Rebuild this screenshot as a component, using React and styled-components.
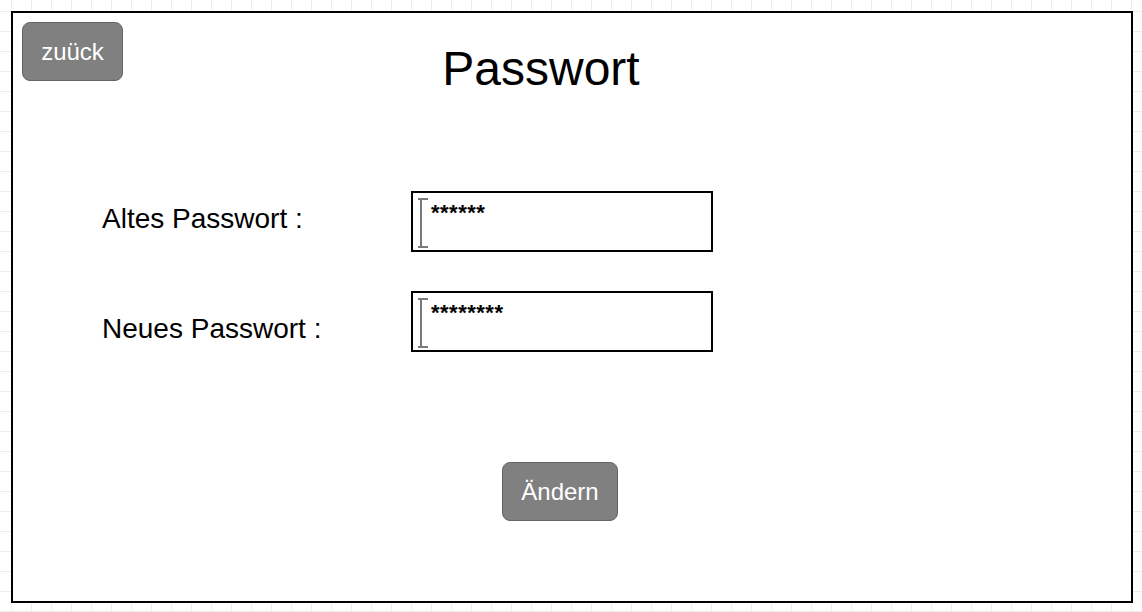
import React from "react";
import styled, { createGlobalStyle } from "styled-components";

const GlobalStyle = createGlobalStyle`
  html, body {
    margin: 0;
    padding: 0;
  }
  body {
    width: 1142px;
    height: 612px;
    overflow: hidden;
    font-family: "Liberation Sans", Arial, Helvetica, sans-serif;
    background-color: #fff;
    background-image:
      linear-gradient(to right, #ececec 1px, transparent 1px),
      linear-gradient(to bottom, #ececec 1px, transparent 1px);
    background-size: 20px 20px;
    background-position: 11px 11px;
  }
`;

function App() {
  return (
    <>
      <GlobalStyle />
      <Frame>
        <Header>
          <GreyButton type="button" $w={101}>zuück</GreyButton>
          <Title>Passwort</Title>
        </Header>
        <Form>
          <Row>
            <Label $shift={-3}>Altes Passwort :</Label>
            <Field>
              <Caret />
              <Stars>******</Stars>
            </Field>
          </Row>
          <Row>
            <Label $shift={7}>Neues Passwort :</Label>
            <Field>
              <Caret />
              <Stars>********</Stars>
            </Field>
          </Row>
        </Form>
        <Footer>
          <GreyButton type="button" $w={116}>Ändern</GreyButton>
        </Footer>
      </Frame>
    </>
  );
}

function Caret() {
  return (
    <CaretSvg width="11" height="50" viewBox="0 0 11 50">
      <line x1="0" y1="1" x2="10" y2="1" stroke="#7a7a7a" strokeWidth="2" />
      <line x1="3" y1="1" x2="3" y2="49" stroke="#7a7a7a" strokeWidth="2" />
      <line x1="0" y1="49" x2="10" y2="49" stroke="#7a7a7a" strokeWidth="2" />
    </CaretSvg>
  );
}

export default App;

const Frame = styled.div`
  box-sizing: border-box;
  margin: 11px 0 0 11px;
  width: 1122px;
  height: 592px;
  border: 2px solid #000;
  background: #fff;
  display: flex;
  flex-direction: column;
  padding: 9px 0 0 9px;
`;

const Header = styled.div`
  display: flex;
  align-items: flex-start;
`;

const Title = styled.h1`
  flex: 1;
  margin: 23px 172px 0 0;
  text-align: center;
  font-size: 48px;
  line-height: 48px;
  font-weight: 400;
  color: #000;
`;

const GreyButton = styled.button`
  box-sizing: border-box;
  width: ${(p) => p.$w}px;
  height: 59px;
  padding: 0;
  background: #808080;
  border: 1px solid #666;
  border-radius: 8px;
  color: #fff;
  font-family: "Liberation Sans", Arial, Helvetica, sans-serif;
  font-size: 24px;
  line-height: 1;
`;

const Form = styled.div`
  display: flex;
  flex-direction: column;
  gap: 39px;
  margin-top: 98px;
  padding-left: 80px;
`;

const Row = styled.div`
  display: grid;
  grid-template-columns: 309px 302px;
  align-items: center;
`;

const Label = styled.div`
  font-size: 28px;
  line-height: 1;
  color: #000;
  position: relative;
  top: ${(p) => p.$shift}px;
`;

const Field = styled.div`
  box-sizing: border-box;
  height: 61px;
  border: 2px solid #000;
  background: #fff;
  display: flex;
  align-items: flex-start;
  padding: 5px 0 0 5px;
`;

const CaretSvg = styled.svg`
  display: block;
  flex: none;
`;

const Stars = styled.span`
  margin: 4px 0 0 2px;
  font-size: 22px;
  line-height: 22px;
  font-weight: 700;
  color: #000;
  letter-spacing: 0.5px;
`;

const Footer = styled.div`
  display: flex;
  margin-top: 110px;
  padding-left: 480px;
`;
